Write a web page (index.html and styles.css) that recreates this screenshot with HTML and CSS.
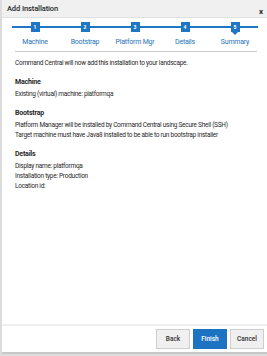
FILE: index.html
```html
<!DOCTYPE html>
<html lang="en">
<head>
  <meta charset="UTF-8" />
  <title>Add Installation</title>
  <link rel="stylesheet" href="styles.css">
</head>
<body>
  <div class="dialog">
    <div class="header">
      <span class="title">Add Installation</span>
      <span class="close">x</span>
    </div>

    <div class="steps">
      <div class="step"><span class="num">1</span><span class="label">Machine</span></div>
      <div class="step"><span class="num">2</span><span class="label">Bootstrap</span></div>
      <div class="step"><span class="num">3</span><span class="label">Platform Mgr</span></div>
      <div class="step"><span class="num">4</span><span class="label">Details</span></div>
      <div class="step current"><span class="num">5</span><span class="label">Summary</span></div>
    </div>
    <div class="separator"></div>

    <div class="content">
      <p class="intro">Command Central will now add this installation to your landscape.</p>

      <h3>Machine</h3>
      <p>Existing (virtual) machine: platformqa</p>

      <h3>Bootstrap</h3>
      <p>Platform Manager will be installed by Command Central using Secure Shell (SSH)</p>
      <p>Target machine must have Java8 installed to be able to run bootstrap installer</p>

      <h3>Details</h3>
      <p>Display name: platformqa</p>
      <p>Installation type: Production</p>
      <p>Location id:</p>
    </div>

    <div class="footer">
      <button class="btn">Back</button>
      <button class="btn btn-primary">Finish</button>
      <button class="btn">Cancel</button>
    </div>
  </div>
</body>
</html>
```

FILE: styles.css
```css
* {
  box-sizing: border-box;
  margin: 0;
  padding: 0;
  font-family: Roboto, "Liberation Sans", sans-serif;
}

body {
  width: 267px;
  height: 356px;
  background-color: rgb(220, 220, 220);
  padding-left: 2px;
  padding-bottom: 2px;
}

.dialog {
  background-color: rgb(255, 255, 255);
  height: 354px;
  display: flex;
  flex-direction: column;
}

.header {
  height: 18px;
  background-color: rgb(240, 240, 240);
  border-bottom: 1px solid rgb(225, 225, 225);
  display: flex;
  align-items: center;
  justify-content: space-between;
  padding-left: 5px;
  padding-right: 4px;
}

.title {
  font-size: 7.5px;
  font-weight: 500;
  color: rgb(40, 40, 40);
  letter-spacing: -0.1px;
}

.close {
  font-size: 8px;
  font-weight: 700;
  color: rgb(40, 40, 40);
  margin-top: 5px;
}

.steps {
  position: relative;
  display: grid;
  grid-template-columns: repeat(5, 50px);
  margin-left: 8px;
  padding-top: 4px;
  padding-bottom: 5px;
}

.steps::before {
  content: "";
  position: absolute;
  left: 2px;
  width: 246px;
  top: 8px;
  height: 2px;
  background-color: rgb(31, 118, 196);
}

.step {
  position: relative;
  display: flex;
  flex-direction: column;
  align-items: center;
}

.num {
  width: 9px;
  height: 10px;
  background-color: rgb(31, 118, 196);
  color: white;
  font-size: 5px;
  font-weight: 700;
  display: flex;
  align-items: center;
  justify-content: center;
}

.step.current .num::after {
  content: "";
  position: absolute;
  top: 10px;
  left: 50%;
  margin-left: -3px;
  border-left: 3px solid transparent;
  border-right: 3px solid transparent;
  border-top: 3px solid rgb(31, 118, 196);
}

.label {
  margin-top: 6px;
  font-size: 7px;
  letter-spacing: -0.2px;
  color: rgb(40, 115, 185);
  white-space: nowrap;
}

.separator {
  height: 1px;
  background-color: rgb(200, 200, 200);
  margin-left: 13px;
  margin-right: 10px;
}

.content {
  flex: 1;
  padding-left: 13px;
  padding-top: 6px;
  font-size: 6.5px;
  letter-spacing: -0.27px;
  color: rgb(40, 40, 40);
}

.content p {
  line-height: 10px;
}

.content h3 {
  font-size: 7px;
  line-height: 10px;
  font-weight: 700;
  letter-spacing: -0.2px;
  margin-top: 9px;
  margin-bottom: 2px;
}

.footer {
  border-top: 2px solid rgb(238, 238, 238);
  border-bottom: 2px solid rgb(200, 200, 200);
  display: flex;
  justify-content: flex-end;
  gap: 3px;
  padding-top: 3px;
  padding-bottom: 3px;
  padding-right: 3px;
}

.btn {
  width: 34px;
  height: 20px;
  background-color: rgb(240, 240, 240);
  border: 1px solid rgb(205, 205, 205);
  font-size: 6.5px;
  font-weight: 500;
  color: rgb(50, 50, 50);
}

.btn-primary {
  background-color: rgb(28, 115, 194);
  border-color: rgb(28, 115, 194);
  color: white;
}
```
